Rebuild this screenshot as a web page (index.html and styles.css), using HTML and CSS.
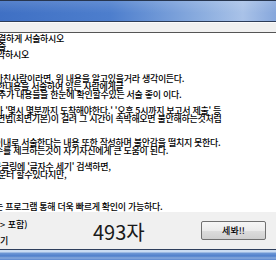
FILE: index.html
```html
<!DOCTYPE html>
<html lang="ko">
<head>
    <meta charset="UTF-8">
    <title>글자수 세기</title>
    <link rel="stylesheet" href="styles.css">
</head>
<body>
    <div class="window">
        <div class="titlebar"></div>
        <div class="menubar"></div>

        <div class="editor">
            <div class="line cut2">결하게 서술하시오</div>
            <div class="line cut2">술</div>
            <div class="line cut3">약하시오</div>
            <div class="line blank"></div>
            <div class="line blank"></div>
            <div class="line cut5">마친사람이라면, 위 내용을 알고있을거라 생각이든다.</div>
            <div class="line cut3">한내용을 서술하여 읽는 사람에게글</div>
            <div class="line cut2">추가 내용들을 한눈에 확인할수있는 서술 좋이 이다.</div>
            <div class="line blank"></div>
            <div class="line cut5">가 '몇시 몇분까지 도착해야한다.' '오후 5시까지 보고서 제출' 등</div>
            <div class="line cut3">면법(최면기본)이 걸려 그 시간이 속박해오면 불안해하는것처럼</div>
            <div class="line blank"></div>
            <div class="line blank"></div>
            <div class="line cut5">이내로 서술한다는 내용 또한 작성하며 불안감을 떨치지 못한다.</div>
            <div class="line cut5">수를 체크하는것이 자기자신에게 큰 도움이 된다.</div>
            <div class="line blank"></div>
            <div class="line cut7">구글링에 '글자수 세기' 검색하면,</div>
            <div class="line cut2">운터 할수있다지만,</div>
            <div class="line blank"></div>
            <div class="line blank"></div>
            <div class="line blank"></div>
            <div class="line cut5">는 프로그램 통해 더욱 빠르게 확인이 가능하다.</div>
        </div>

        <div class="panel">
            <div class="labels">
                <span>&gt; 포함)</span>
                <span>기</span>
            </div>
            <div class="count">493자</div>
            <button class="count-btn">세봐!!</button>
        </div>

        <div class="frame-bottom"></div>
    </div>
</body>
</html>
```

FILE: styles.css
```css
body {
    margin: 0;
    background: #f0f0f0;
    font-family: "Noto Sans CJK KR", "Liberation Sans", sans-serif;
}

.window {
    width: 276px;
    height: 260px;
    overflow: hidden;
    display: flex;
    flex-direction: column;
}

.titlebar {
    height: 20px;
    border-top: 1px solid #27364f;
    border-bottom: 1px solid #2d3c57;
    background:
        linear-gradient(to bottom, rgba(255,255,255,0.12), rgba(255,255,255,0) 60%),
        linear-gradient(to right, #3f70c4 0%, #4d7ecd 40%, #8fb0e0 75%, #a9c2e8 88%, #86a7dc 100%);
}

.menubar {
    height: 9px;
    background: #f0f0f0;
    border-top: 1px solid #fbfbfb;
    border-bottom: 1px solid #555;
}

.editor {
    height: 181px;
    background: #fff;
    overflow: hidden;
    padding-top: 2px;
    box-sizing: border-box;
    font-size: 9px;
    font-weight: 500;
    letter-spacing: -0.3px;
    color: #000;
}

.line {
    height: 8px;
    line-height: 8px;
    white-space: nowrap;
}

.cut2 { margin-left: -2px; }
.cut3 { margin-left: -3px; }
.cut5 { margin-left: -5px; }
.cut7 { margin-left: -7px; }

.panel {
    height: 37px;
    display: flex;
    align-items: center;
    background: #f0f0f0;
}

.labels {
    width: 93px;
    height: 37px;
    display: flex;
    flex-direction: column;
    justify-content: space-between;
    padding: 8px 0 3px;
    box-sizing: border-box;
    font-size: 9px;
    font-weight: 500;
    line-height: 10px;
    color: #000;
}

.count {
    font-size: 20px;
    line-height: 20px;
    color: #1a1a1a;
    margin-top: 2px;
}

.count-btn {
    margin-left: auto;
    margin-right: 10px;
    width: 65px;
    height: 19px;
    padding: 0;
    margin-top: -1px;
    border: 1px solid #707070;
    border-radius: 2px;
    background: linear-gradient(to bottom, #f6f6f6 0%, #ebebeb 50%, #dddddd 51%, #cfcfcf 100%);
    font-family: "Noto Sans CJK KR", sans-serif;
    font-size: 9px;
    font-weight: 500;
    color: #000;
}

.frame-bottom {
    height: 10px;
    border-top: 1px solid #2e3e5c;
    background: linear-gradient(to bottom, #c9dbf2 0%, #c9dbf2 20%, #6f98d6 30%, #4f7fcb 60%, #86a8dc 80%, #5a86cf 100%);
}
```
